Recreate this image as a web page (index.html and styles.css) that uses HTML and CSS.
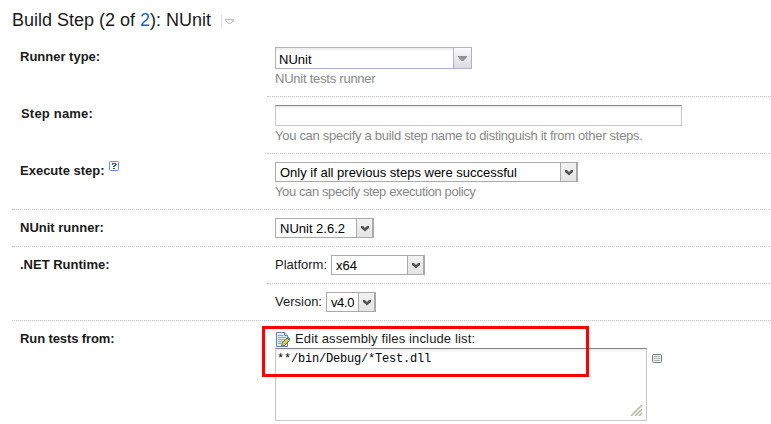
FILE: index.html
```html
<!DOCTYPE html>
<html lang="en">
<head>
<meta charset="utf-8">
<title>Build Step: NUnit</title>
<link rel="stylesheet" href="styles.css">
</head>
<body>
<main class="page">
  <h2 class="title"><span class="title-text">Build Step (2 of <a class="link">2</a>): NUnit</span>
    <span class="title-menu"><svg width="9" height="5" viewBox="0 0 9 5"><path d="M.5.5h8v1l-3 3h-2l-3-3z" fill="#f4f4f4" stroke="#bbb"/></svg></span>
  </h2>
  <section class="row row-runner">
    <div class="label"><span>Runner type:</span></div>
    <div class="field part-line">
      <div class="combo"><span class="combo-text">NUnit</span><span class="combo-button"><svg width="9" height="5" viewBox="0 0 9 5"><path d="M0 0h9v1L5.500 5h-2L0 1z" fill="#8f9297"/></svg></span></div>
      <div class="hint"><span class="h-runner">NUnit tests runner</span></div>
    </div>
  </section>
  <section class="row row-name">
    <div class="label label-name"><span>Step name:</span></div>
    <div class="field part-line">
      <div class="input"></div>
      <div class="hint"><span class="h-name">You can specify a build step name to distinguish it from other steps.</span></div>
    </div>
  </section>
  <section class="row row-execute full-line">
    <div class="label label-execute"><span>Execute step:</span><svg class="help" width="10" height="10" viewBox="0 0 10 10"><rect x=".5" y=".5" width="9" height="9" rx="1" fill="#fff" stroke="#5b93e2"/><path d="M3 2h4v1h1v1H7v1H6v1H4V5h1V4h1V3H4v1H3zM4 7h2v1H4z" fill="#555"/></svg></div>
    <div class="field">
      <div class="select w-execute"><span>Only if all previous steps were successful</span><span class="arrow"><svg width="8" height="7" viewBox="0 0 8 7"><path d="M0 1h2l2 2 2-2h2v2L4 6.500 0 3z" fill="#555"/></svg></span></div>
      <div class="hint"><span class="h-execute">You can specify step execution policy</span></div>
    </div>
  </section>
  <section class="row row-short full-line">
    <div class="label"><span>NUnit runner:</span></div>
    <div class="field">
      <div class="select w-nunit"><span>NUnit 2.6.2</span><span class="arrow"><svg width="8" height="7" viewBox="0 0 8 7"><path d="M0 1h2l2 2 2-2h2v2L4 6.500 0 3z" fill="#555"/></svg></span></div>
    </div>
  </section>
  <section class="row row-short">
    <div class="label"><span>.NET Runtime:</span></div>
    <div class="field part-line inline">
      <div class="name-platform">Platform:</div>
      <div class="select w-platform"><span>x64</span><span class="arrow"><svg width="8" height="7" viewBox="0 0 8 7"><path d="M0 1h2l2 2 2-2h2v2L4 6.500 0 3z" fill="#555"/></svg></span></div>
    </div>
  </section>
  <section class="row row-short full-line">
    <div class="label"></div>
    <div class="field inline">
      <div class="name-version">Version:</div>
      <div class="select w-version"><span class="s-version">v4.0</span><span class="arrow"><svg width="8" height="7" viewBox="0 0 8 7"><path d="M0 1h2l2 2 2-2h2v2L4 6.500 0 3z" fill="#555"/></svg></span></div>
    </div>
  </section>
  <section class="row row-tests">
    <div class="label label-tests"><span>Run tests from:</span></div>
    <div class="field tests">
      <div class="edit">
        <svg width="15" height="15" viewBox="0 0 15 15"><path d="M.5.5h8l3 3v11H.5z" fill="#e4eef9" stroke="#6484ad"/><path d="M8.500.5v3h3" fill="#fff" stroke="#6484ad"/><path d="M2 3.500h5M2 5.500h8M2 7.500h7M2 9.500h5M2 11.500h3" stroke="#8ba5c5"/><path d="M6 11l5-5 2.500 2.500-5 5L5.500 14z" fill="#edbd4b" stroke="#39714f" stroke-width=".8"/><path d="M11 5.500l1-1 2.500 2.500-1 1.500z" fill="#4e83c4"/></svg>
        <span class="edit-text">Edit assembly files include list:</span>
      </div>
      <div class="area-line">
        <div class="area"><span>**/bin/Debug/*Test.dll</span>
          <svg class="grip" width="11" height="11" viewBox="0 0 11 11"><path d="M0 11L11 0M4 11l7-7M8 11l3-3" stroke="#b8b59f" stroke-width="1.500"/></svg>
        </div>
        <svg class="list-icon" width="10" height="9" viewBox="0 0 10 9"><rect x=".5" y=".5" width="9" height="8" rx="1" fill="#f4f6f7" stroke="#74787a"/><path d="M2 2.500h6M2 4.500h6M2 6.500h6" stroke="#a5afb2"/></svg>
      </div>
      <div class="highlight"></div>
    </div>
  </section>
</main>
</body>
</html>
```
FILE: styles.css
```css
* { box-sizing: border-box; }
body { margin: 0; background: #fff; color: #1a1a1a; font: 13px/16px "Liberation Sans", Arial, sans-serif; overflow: hidden; }
svg { display: block; flex: none; }
.page { width: 771px; height: 424px; padding-left: 12px; white-space: nowrap; }
.title { margin: 0; height: 39px; padding-top: 9px; display: flex; font-size: 18px; line-height: 22px; font-weight: 400; }
.title-text { width: 209px; }
.link { color: #1564c8; }
.title-menu { height: 13px; margin-top: 6px; padding: 4px 0 0 3px; border-left: 1px solid #ddd; }
.row { display: flex; }
.row-runner { height: 58px; }
.row-name { height: 57px; }
.row-execute { height: 56px; }
.row-short { height: 37px; }
.row-tests { height: 103px; }
.label { width: 255px; padding: 10px 0 0 8px; font-weight: 700; display: flex; align-items: flex-start; }
.label-name { padding: 9px 0 0 9px; letter-spacing: .2px; }
.label-execute { padding-top: 9px; }
.label-tests { letter-spacing: -.1px; }
.field { flex: 1; padding: 8px 0 0 8px; }
.part-line, .full-line { border-bottom: 1px dotted #c4c4c4; }
.help { margin: -2px 0 0 4px; }
.combo { width: 197px; height: 22px; border: 1px solid #b0b1c8; display: flex; color: #000; line-height: 23px; box-shadow: inset 0 2px 2px #eee; }
.combo-text { flex: 1; padding-left: 3px; }
.combo-button { width: 18px; border-left: 1px solid #b0b1c8; padding: 8px 0 0 4px; background: linear-gradient(#fafafa, #dcdcdf); }
.hint { color: #888; padding-top: 2px; }
.h-runner { letter-spacing: -.24px; }
.h-name { letter-spacing: -.29px; }
.h-execute { letter-spacing: -.39px; }
.input { width: 407px; height: 21px; border: 1px solid #c8c8c8; border-top-color: #858585; box-shadow: inset 0 2px 2px #eee; }
.select { height: 20px; border: 1px solid #a9a9ae; color: #000; display: flex; justify-content: space-between; padding-left: 4px; line-height: 19px; }
.arrow { width: 17px; border: 1px solid #a9a9ae; border-width: 0 1px 0 1px; background: linear-gradient(#f2f2f2, #e4e4e4); padding: 6px 0 0 4px; }
.w-execute { width: 303px; }
.w-nunit { width: 99px; }
.w-platform { width: 94px; }
.w-version { width: 50px; }
.s-version { letter-spacing: -.4px; }
.inline { display: flex; line-height: 20px; }
.name-platform { width: 56px; }
.name-version { width: 51px; }
.tests { position: relative; padding-top: 9px; }
.edit { display: flex; height: 18px; padding: 2px 0 0 1px; }
.edit-text { margin: -1px 0 0 4px; letter-spacing: .14px; }
.area-line { display: flex; align-items: flex-start; }
.area { position: relative; width: 372px; height: 73px; border: 1px solid #c8c8c8; border-top-color: #858585; box-shadow: inset 0 2px 2px #eee; padding: 2px 0 0 1px; color: #000; font: 12px/16px "Liberation Mono", "Courier New", monospace; letter-spacing: -.2px; }
.grip { position: absolute; right: 4px; bottom: 4px; }
.list-icon { margin: 6px 0 0 5px; }
.highlight { position: absolute; left: -5px; top: 5px; width: 327px; height: 51px; border: 3px solid #f00; }
```
